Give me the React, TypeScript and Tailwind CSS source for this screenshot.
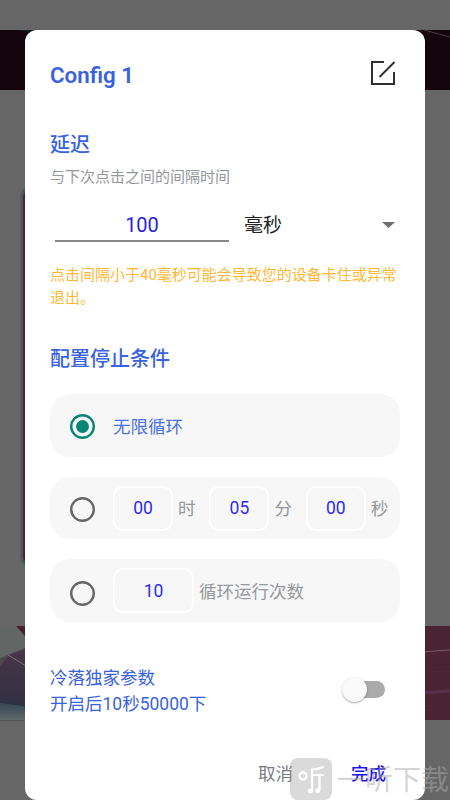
import { useState } from "react";

const Backdrop = () => (
  <svg className="absolute inset-0" width="450" height="800" viewBox="0 0 450 800">
    <defs>
      <linearGradient id="hill" x1="0" y1="0" x2="0" y2="1">
        <stop offset="0" stopColor="#4b3448" />
        <stop offset="1" stopColor="#2e3142" />
      </linearGradient>
      <linearGradient id="water" x1="0" y1="0" x2="0" y2="1">
        <stop offset="0" stopColor="#344552" />
        <stop offset="1" stopColor="#5f6a6d" />
      </linearGradient>
    </defs>
    <rect width="450" height="800" fill="#666666" />
    {/* top banner */}
    <rect y="30" width="450" height="60" fill="#14060c" />
    <path d="M18 30h24v6Q28 31 18 30z" fill="#162028" />
    <path d="M424 30l26 7" stroke="#463b40" />
    {/* edge of the middle card */}
    <rect x="20.500" y="187" width="20" height="380" rx="8" fill="#555d62" />
    <rect x="21.500" y="188" width="20" height="378" rx="8" fill="#42545e" />
    <rect x="23.200" y="190" width="20" height="374" rx="7" fill="#5a1c2b" />
    {/* bottom banner */}
    <rect y="626" width="30" height="94" fill="#626665" />
    <path d="M16 626h14v16z" fill="#4a2030" />
    <path d="M0 658l30-12v80H0z" fill="#4d494e" />
    <path d="M0 666l9-11 21-7v62L0 703z" fill="url(#hill)" />
    <path d="M8 655l20 12" stroke="#77727a" />
    <path d="M0 703l30 4v13H0z" fill="url(#water)" />
    <rect y="720" width="30" height="10" fill="#666666" />
    <path d="M0 720.500h30" stroke="#555555" />
    <rect x="420" y="626" width="30" height="94" fill="#4b2433" />
    <path d="M420 652l30-2" stroke="#776069" />
    <path d="M420 693l30-2" stroke="#5b2f4b" strokeWidth="3" />
    <path d="M420 707l12-1M420 672l30-1" stroke="#53293a" />
  </svg>
);

const EditIcon = () => (
  <svg width="26" height="26" viewBox="0 0 26 26" fill="none" stroke="#303030" strokeWidth="2">
    <path d="M14 2H2V24H24V12" />
    <path d="M9.500 17L24.500 2" />
  </svg>
);

const Radio = ({ checked, onClick }: { checked: boolean; onClick: () => void }) => (
  <button onClick={onClick} className={`shrink-0 ${checked ? "text-[#058574]" : "text-[#666666]"}`}>
    <svg className="block" width="25" height="25" viewBox="0 0 25 25">
      <circle cx="12.500" cy="12.500" r="11.300" fill="none" stroke="currentColor" strokeWidth="2.400" />
      {checked && <circle cx="12.500" cy="12.500" r="6.400" fill="currentColor" />}
    </svg>
  </button>
);

const timeParts = [
  { value: "00", unit: "时" },
  { value: "05", unit: "分" },
  { value: "00", unit: "秒" },
];

const Watermark = () => (
  <div className="pointer-events-none absolute bottom-0 left-[290px] flex h-[42px] items-center">
    <svg width="42" height="42" viewBox="0 0 42 42" fill="none">
      <rect width="42" height="42" rx="8" fill="#999999" fillOpacity="0.36" />
      <g stroke="#ffffff" strokeWidth="2.200" strokeLinecap="round">
        <circle cx="13" cy="18" r="3.600" />
        <path d="M33 9q-5 2.500-11 2.500V33M22 17h11M29.500 17v15" />
      </g>
      <circle cx="20.500" cy="33" r="2.500" fill="#ffffff" />
      <circle cx="27.800" cy="32.500" r="2.500" fill="#ffffff" />
    </svg>
    <span className="mt-[3px] ml-[5px] text-[28px] leading-[42px] whitespace-nowrap text-[#aaaaaa]/50">
      一听下载
    </span>
  </div>
);

const App = () => {
  const [mode, setMode] = useState("infinite");
  const [isFast, setIsFast] = useState(false);

  return (
    <div className="relative h-[800px] w-[450px] overflow-hidden bg-[#666666] px-[25px] pt-[30px] font-['Roboto','Noto_Sans_CJK_SC',sans-serif]">
      <Backdrop />
      <div className="relative flex h-[770px] flex-col rounded-xl bg-white px-[25px] pt-[30px]">
        <div className="flex h-[30px] items-center justify-between">
          <h1 className="pt-[2px] text-[22.300px] font-semibold text-[#3962df]">Config 1</h1>
          <button className="mr-[4px] -mt-[4px]">
            <EditIcon />
          </button>
        </div>

        <h2 className="mt-[40px] text-xl leading-[30px] font-medium text-[#3962df]">延迟</h2>
        <p className="mt-[5px] text-[15px] leading-[24px] text-[#94979c]">与下次点击之间的间隔时间</p>

        <div className="mt-[19px] flex h-[34px]">
          <div className="ml-[5px] w-[174px] border-b-2 border-[#888888] text-center text-xl leading-[34px] text-[#2a21dc]">
            100
          </div>
          <div className="ml-[15px] flex flex-1 items-center justify-between pr-[5px] text-[19px] text-[#222222]">
            <span className="pt-[2px]">毫秒</span>
            <svg width="13" height="6" viewBox="0 0 13 6">
              <path d="M0 0h13L6.500 6z" fill="#707070" />
            </svg>
          </div>
        </div>

        <p className="mt-[22px] text-[15px] leading-[22.500px] text-[#ffb733]">
          点击间隔小于40毫秒可能会导致您的设备卡住或异常退出。
        </p>

        <h2 className="mt-[35px] text-xl leading-[30px] font-medium text-[#3962df]">配置停止条件</h2>

        <div className="mt-[20px] flex flex-col gap-5 text-[17.500px] text-[#94979c]">
          <div className="flex h-[63px] items-center rounded-[20px] bg-[#f7f7f7] pt-[2px] pl-[20px]">
            <Radio checked={mode === "infinite"} onClick={() => setMode("infinite")} />
            <span className="ml-[18px] pt-[2px] text-[#4a72e4]">无限循环</span>
          </div>
          <div className="flex h-[62px] items-center rounded-[20px] bg-[#f7f7f7] pl-[20px]">
            <div className="flex pt-[3px]">
              <Radio checked={mode === "time"} onClick={() => setMode("time")} />
            </div>
            <div className="ml-[18px] flex gap-[14px]">
              {timeParts.map((part) => (
                <div key={part.unit} className="flex items-center gap-[5px]">
                  <span className="flex h-[45px] w-[60px] items-center justify-center rounded-[10px] border-2 border-white text-[#2f2bf0]">
                    {part.value}
                  </span>
                  <span className="w-[17.400px] pt-[2px]">{part.unit}</span>
                </div>
              ))}
            </div>
          </div>
          <div className="flex h-[63px] items-center rounded-[20px] bg-[#f7f7f7] pl-[20px]">
            <div className="flex pt-[5px]">
              <Radio checked={mode === "count"} onClick={() => setMode("count")} />
            </div>
            <span className="mr-[5px] ml-[18px] flex h-[45px] w-[81px] items-center justify-center rounded-[10px] border-2 border-white pt-[1px] text-[#2f2bf0]">
              10
            </span>
            <span className="pt-[4px]">循环运行次数</span>
          </div>
        </div>

        <div className="mt-[43px] flex h-[52px] items-center justify-between">
          <p className="text-[17.500px] leading-[26px] text-[#3962df]">
            冷落独家参数
            <br />
            开启后10秒50000下
          </p>
          <button
            onClick={() => setIsFast(!isFast)}
            className={`mr-[15px] mb-[3px] flex h-[17px] w-[40px] items-center rounded-full bg-[#aaaaaa] ${
              isFast ? "justify-end" : ""
            }`}
          >
            <span className="-ml-[3px] size-[25px] rounded-full bg-[#fafafa] shadow-[0_1px_2px_rgba(0,0,0,0.35)]" />
          </button>
        </div>

        <div className="mt-[44px] mr-[14px] flex justify-end gap-[58px] text-[17.500px] leading-[26px]">
          <button className="text-[#777b82]">取消</button>
          <button className="font-medium text-[#1d15e8]">完成</button>
        </div>
      </div>
      <Watermark />
    </div>
  );
};

export default App;
